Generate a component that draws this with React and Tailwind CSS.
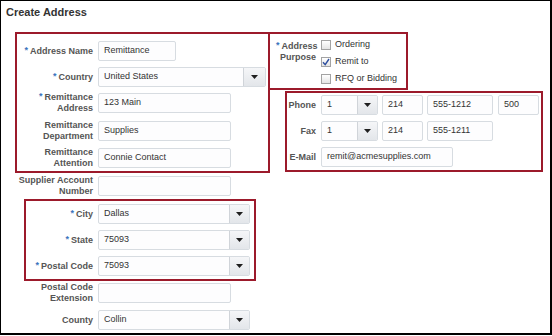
import React from "react";

const Star = () => (
  <span className="text-[#3b74bd] text-[9px] align-top leading-[8px] mr-[2px]">*</span>
);

const Tri = () => (
  <svg width="7" height="4" viewBox="0 0 7 4">
    <path d="M0 0H7L3.5 4Z" fill="#1f1f1f" />
  </svg>
);

function TextBox({ w, value }) {
  return (
    <div
      className={`${w} h-[20px] shrink-0 border border-[#d7dce1] rounded-[2px] bg-[#fdfdfe] flex items-center pl-[5px] text-[9px] text-[#333] whitespace-nowrap`}
    >
      {value}
    </div>
  );
}

function Select({ w, value, btn }) {
  return (
    <div
      className={`${w} h-[20px] shrink-0 border border-[#d7dce1] rounded-[2px] bg-[#fdfdfe] flex text-[9px] text-[#333] overflow-hidden`}
    >
      <div className="flex-1 flex items-center pl-[5px] whitespace-nowrap">{value}</div>
      <div
        className={`${btn} border-l border-[#d0d4d9] bg-linear-to-b from-[#f5f6f8] to-[#e3e6ea] flex items-center justify-center`}
      >
        <Tri />
      </div>
    </div>
  );
}

function Row({ mt, label, star, children }) {
  return (
    <div className={`flex items-center h-[20px] ${mt}`}>
      <div className="w-[92px] shrink-0 text-right font-bold text-[9px] leading-[11px] text-[#555]">
        {star && <Star />}
        {label}
      </div>
      <div className="ml-[5px] flex">{children}</div>
    </div>
  );
}

function RRow({ mt, label, children }) {
  return (
    <div className={`flex items-center h-[20px] ${mt}`}>
      <div className="w-[40px] shrink-0 text-right font-bold text-[9px] leading-[11px] text-[#555]">
        {label}
      </div>
      <div className="ml-[5px] flex">{children}</div>
    </div>
  );
}

function Check({ checked, label }) {
  return (
    <div className="flex items-center h-[17px] gap-[4px]">
      <div className="w-[10px] h-[10px] border border-[#a3a3a3] bg-linear-to-b from-white to-[#e4e4e4] flex items-center justify-center">
        {checked && (
          <svg width="8" height="8" viewBox="0 0 8 8">
            <path d="M1 4.2L3.2 6.6L7 1" stroke="#2d4e9e" strokeWidth="1.4" fill="none" />
          </svg>
        )}
      </div>
      <span className="text-[9px] text-[#333]">{label}</span>
    </div>
  );
}

export default function App() {
  return (
    <div className="relative w-[552px] h-[335px] bg-white border-l border-t border-r-2 border-b-2 border-black font-['Liberation_Sans',Arial,sans-serif] overflow-hidden">
      <div className="pt-[5px] pl-[5px] text-[11px] leading-[13px] font-bold text-[#333]">
        Create Address
      </div>
      <div className="flex">
        <div className="w-[275px] shrink-0 pt-[22px]">
          <Row mt="mt-0" label="Address Name" star>
            <TextBox w="w-[78px]" value="Remittance" />
          </Row>
          <Row mt="mt-[6px]" label="Country" star>
            <Select w="w-[168px]" value="United States" btn="w-[22px]" />
          </Row>
          <Row
            mt="mt-[6px]"
            label={
              <>
                <Star />
                Remittance
                <br />
                Address
              </>
            }
          >
            <TextBox w="w-[133px]" value="123 Main" />
          </Row>
          <Row
            mt="mt-[8px]"
            label={
              <>
                Remittance
                <br />
                Department
              </>
            }
          >
            <TextBox w="w-[133px]" value="Supplies" />
          </Row>
          <Row
            mt="mt-[7px]"
            label={
              <>
                Remittance
                <br />
                Attention
              </>
            }
          >
            <TextBox w="w-[133px]" value="Connie Contact" />
          </Row>
          <Row
            mt="mt-[8px]"
            label={
              <>
                Supplier Account
                <br />
                Number
              </>
            }
          >
            <TextBox w="w-[133px]" value="" />
          </Row>
          <Row mt="mt-[8px]" label="City" star>
            <Select w="w-[152px]" value="Dallas" btn="w-[20px]" />
          </Row>
          <Row mt="mt-[6px]" label="State" star>
            <Select w="w-[152px]" value="75093" btn="w-[20px]" />
          </Row>
          <Row mt="mt-[6px]" label="Postal Code" star>
            <Select w="w-[152px]" value="75093" btn="w-[20px]" />
          </Row>
          <Row
            mt="mt-[7px]"
            label={
              <>
                Postal Code
                <br />
                Extension
              </>
            }
          >
            <TextBox w="w-[133px]" value="" />
          </Row>
          <Row mt="mt-[7px]" label="County">
            <Select w="w-[152px]" value="Collin" btn="w-[20px]" />
          </Row>
        </div>

        <div className="pt-[17px]">
          <div className="flex items-start">
            <div className="w-[40px] shrink-0 mt-[5px] text-right font-bold text-[9px] leading-[11px] text-[#555]">
              <Star />
              Address
              <br />
              Purpose
            </div>
            <div className="ml-[5px] flex flex-col">
              <Check label="Ordering" />
              <Check label="Remit to" checked />
              <Check label="RFQ or Bidding" />
            </div>
          </div>
          <RRow mt="mt-[8px]" label="Phone">
            <Select w="w-[57px]" value="1" btn="w-[20px]" />
            <div className="ml-[4px]">
              <TextBox w="w-[41px]" value="214" />
            </div>
            <div className="ml-[4px]">
              <TextBox w="w-[66px]" value="555-1212" />
            </div>
            <div className="ml-[5px]">
              <TextBox w="w-[41px]" value="500" />
            </div>
          </RRow>
          <RRow mt="mt-[6px]" label="Fax">
            <Select w="w-[57px]" value="1" btn="w-[20px]" />
            <div className="ml-[4px]">
              <TextBox w="w-[41px]" value="214" />
            </div>
            <div className="ml-[4px]">
              <TextBox w="w-[66px]" value="555-1211" />
            </div>
          </RRow>
          <RRow mt="mt-[6px]" label="E-Mail">
            <TextBox w="w-[132px]" value="remit@acmesupplies.com" />
          </RRow>
        </div>
      </div>

      {/* red annotation highlight boxes */}
      <div className="absolute left-[14px] top-[31px] w-[255px] h-[141px] border-2 border-[#9c1a2b] pointer-events-none" />
      <div className="absolute left-[267px] top-[31px] w-[140px] h-[58px] border-2 border-[#9c1a2b] pointer-events-none" />
      <div className="absolute left-[284px] top-[90px] w-[258px] h-[81px] border-2 border-[#9c1a2b] pointer-events-none" />
      <div className="absolute left-[23px] top-[198px] w-[232px] h-[82px] border-2 border-[#9c1a2b] pointer-events-none" />
    </div>
  );
}
